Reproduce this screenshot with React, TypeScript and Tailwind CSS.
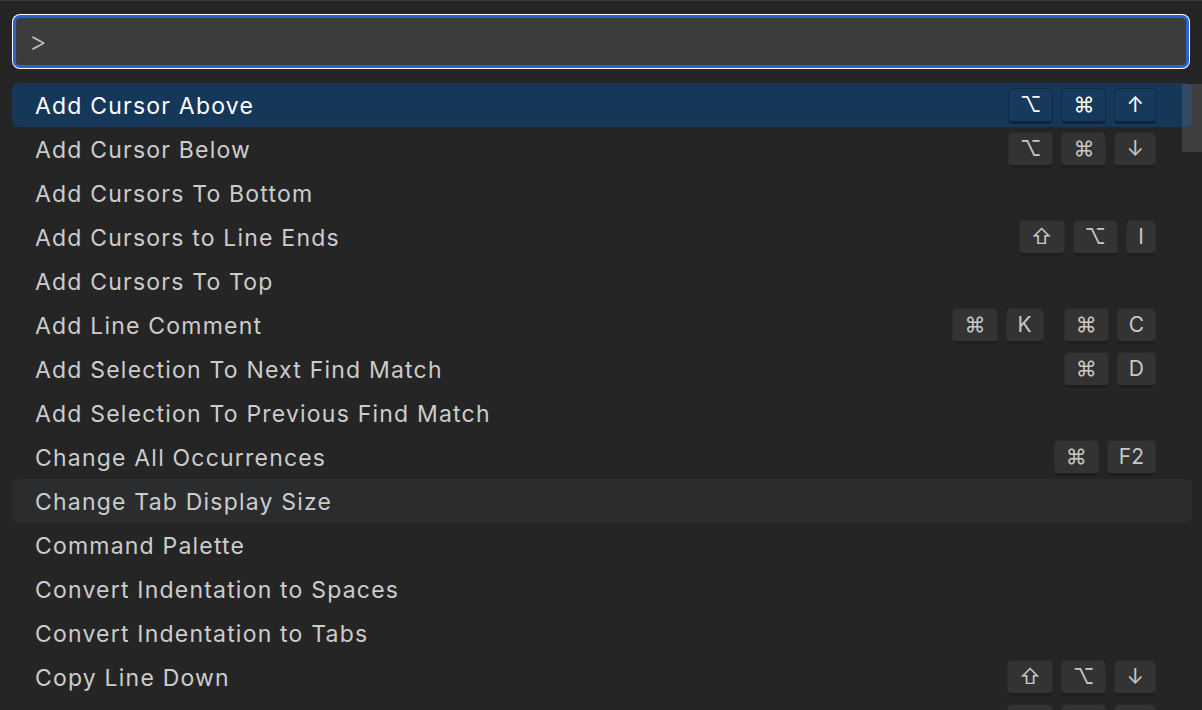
import React from "react";

type Cmd = {
  label: string;
  keys?: string[][];
  state?: "selected" | "hover";
};

const commands: Cmd[] = [
  { label: "Add Cursor Above", keys: [["⌥", "⌘", "↑"]], state: "selected" },
  { label: "Add Cursor Below", keys: [["⌥", "⌘", "↓"]] },
  { label: "Add Cursors To Bottom" },
  { label: "Add Cursors to Line Ends", keys: [["⇧", "⌥", "I"]] },
  { label: "Add Cursors To Top" },
  { label: "Add Line Comment", keys: [["⌘", "K"], ["⌘", "C"]] },
  { label: "Add Selection To Next Find Match", keys: [["⌘", "D"]] },
  { label: "Add Selection To Previous Find Match" },
  { label: "Change All Occurrences", keys: [["⌘", "F2"]] },
  { label: "Change Tab Display Size", state: "hover" },
  { label: "Command Palette" },
  { label: "Convert Indentation to Spaces" },
  { label: "Convert Indentation to Tabs" },
  { label: "Copy Line Down", keys: [["⇧", "⌥", "↓"]] },
  { label: "Copy Line Up", keys: [["⇧", "⌥", "↑"]] },
];

function Keycap({ k, selected }: { k: string; selected: boolean }) {
  return (
    <span
      className={
        selected
          ? "flex h-[36px] min-w-[30px] items-center justify-center rounded-[5px] border border-[#0e2b48] border-b-[3px] border-b-[#0c233b] bg-[#17395c] px-[11px] text-[21px] text-white"
          : "flex h-[36px] min-w-[30px] items-center justify-center rounded-[5px] border border-[#2c2c2c] border-b-[3px] border-b-[#1e1e1e] bg-[#333333] px-[11px] text-[21px] text-[#c8c8c8]"
      }
      style={{ fontFamily: 'Inter, "DejaVu Sans", sans-serif' }}
    >
      {k}
    </span>
  );
}

export default function App() {
  return (
    <main
      className="relative h-[710px] w-full overflow-hidden border-t border-[#383838] bg-[#252526]"
      style={{ fontFamily: 'Inter, "Noto Sans", sans-serif' }}
    >
      {/* Search input */}
      <div className="px-[13px] pt-[14px]">
        <div className="flex h-[53px] items-center rounded-[7px] border-[3px] border-[#2864d0] bg-[#3c3c3c] px-[13px] shadow-[0_0_0_1px_#ffffff]">
          <span className="text-[27px] font-light leading-none text-[#c0c0c0]">&gt;</span>
        </div>
      </div>

      {/* Command list */}
      <div className="mt-[15px] flex flex-col pl-[12px] pr-[10px]">
        {commands.map((c) => {
          const selected = c.state === "selected";
          return (
            <div
              key={c.label}
              className={
                "flex h-[44px] shrink-0 items-center justify-between rounded-[6px] pl-[23px] pr-[36px] " +
                (selected
                  ? "bg-[#14375a] text-white"
                  : c.state === "hover"
                  ? "bg-[#2b2c2e] text-[#cccccc]"
                  : "text-[#cccccc]")
              }
            >
              <span className="pt-[3px] text-[23px] tracking-[1.2px]">{c.label}</span>
              {c.keys && (
                <div className="flex items-center gap-[20px] pt-[2px]">
                  {c.keys.map((chord, i) => (
                    <div key={i} className="flex items-center gap-[8px]">
                      {chord.map((k, j) => (
                        <Keycap key={j} k={k} selected={selected} />
                      ))}
                    </div>
                  ))}
                </div>
              )}
            </div>
          );
        })}
      </div>

      {/* Scrollbar thumb */}
      <div className="absolute right-0 top-[83px] h-[68px] w-[20px] bg-[#7a7a7a]/30" />
    </main>
  );
}
